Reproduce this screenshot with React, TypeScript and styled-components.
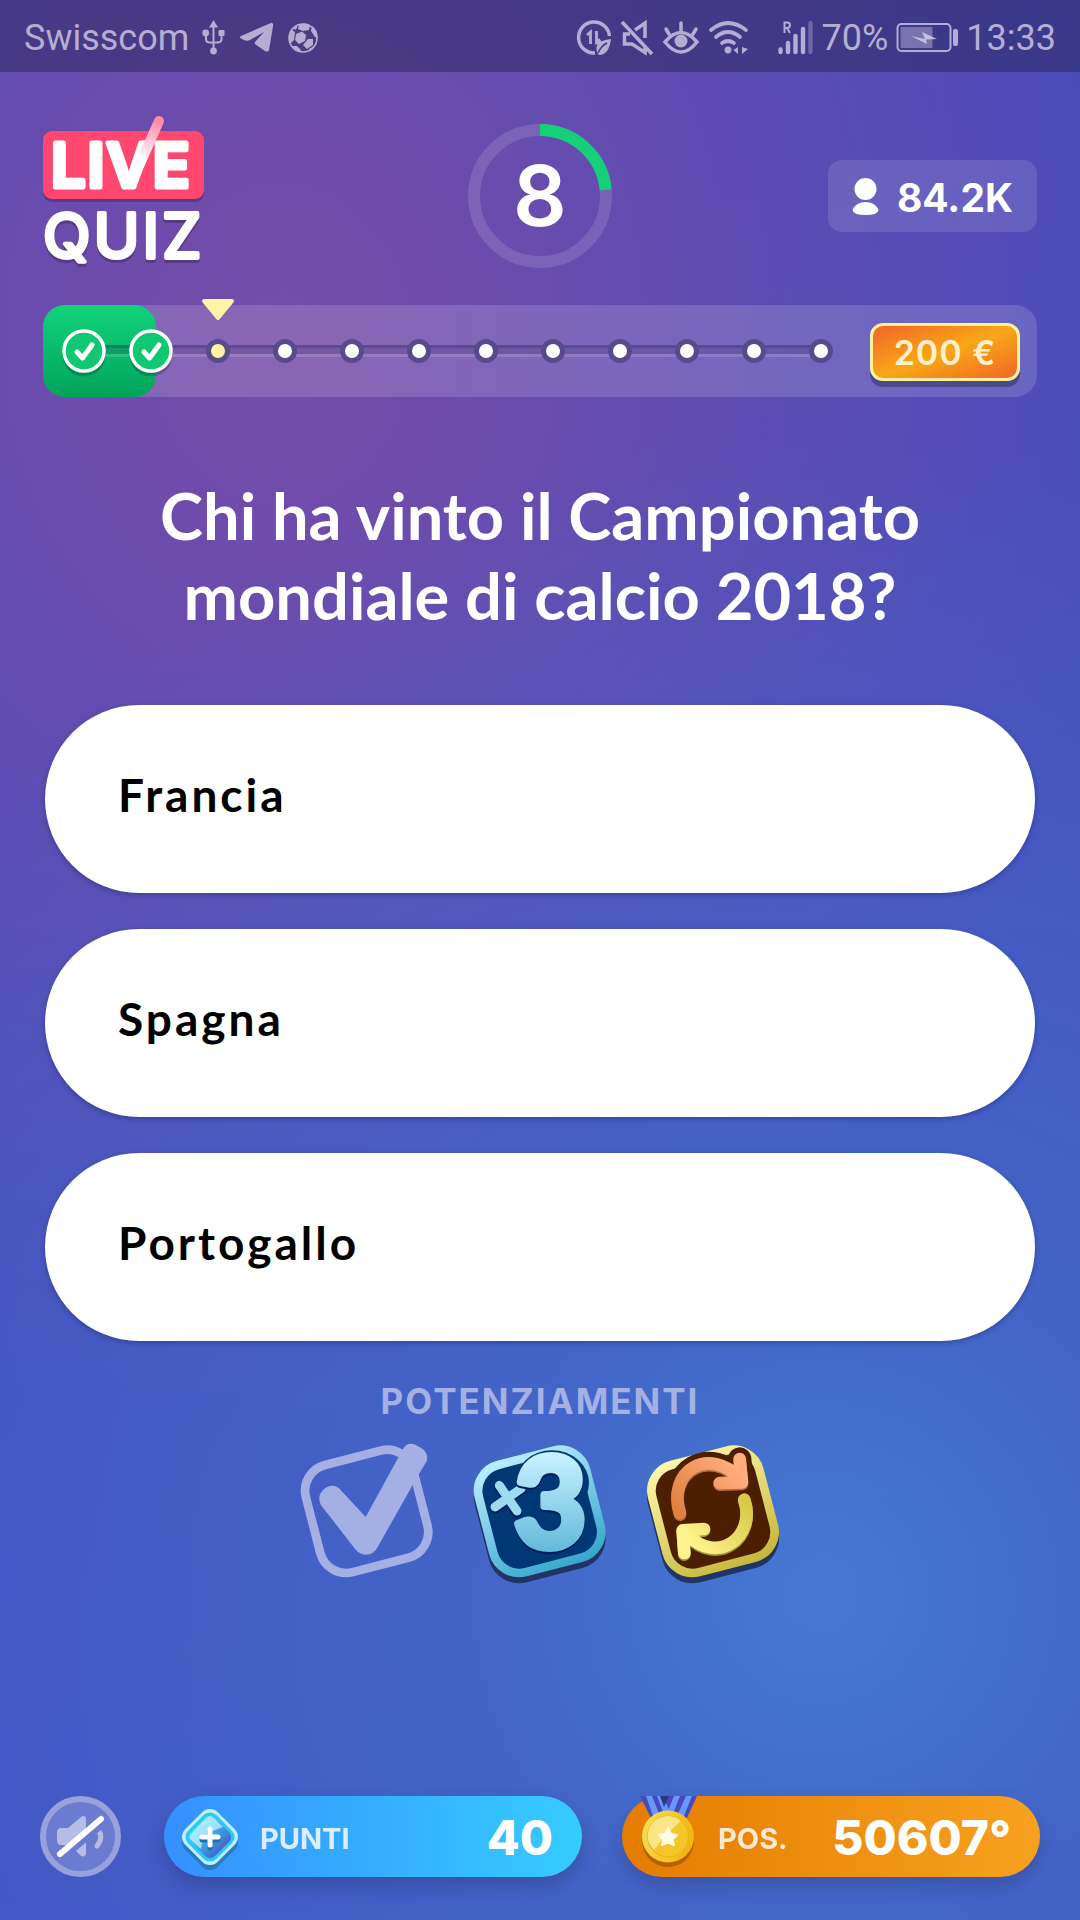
import React, { useState } from "react";
import styled, { createGlobalStyle } from "styled-components";

const display = `Inter, "Open Sans", sans-serif`;
const reading = `Lato, "Open Sans", sans-serif`;
const system = `Roboto, "Noto Sans", sans-serif`;

const GlobalStyle = createGlobalStyle`
  *, *::before, *::after { box-sizing: border-box; }
  body { margin: 0; background: #4455c1; }
  button { font: inherit; border: 0; padding: 0; background: none; color: inherit; cursor: pointer; }
  svg { display: block; flex: none; overflow: visible; }
`;

const Page = styled.div`
  min-height: 100vh;
  display: flex;
  flex-direction: column;
  font-family: ${display};
  color: #fff;
  background:
    radial-gradient(circle 1160px at 76% 83%, #4479d2 0, rgba(67, 104, 200, 0.8) 32%, rgba(67, 92, 194, 0) 100%),
    radial-gradient(ellipse 880px 1080px at 26% 18%, #764ca9 0, rgba(104, 76, 174, 0.84) 42%, rgba(75, 77, 184, 0) 100%),
    linear-gradient(#4a4bb9, #4252c4);
`;

const StatusBar = styled.header`
  height: 72px;
  padding: 3px 24px 0;
  display: flex;
  align-items: center;
  justify-content: space-between;
  background: rgba(30, 30, 75, 0.42);
  color: #b6aed2;
  font: 400 36px/44px ${system};
`;

const StatusGroup = styled.div<{ $gap: number }>`
  display: flex;
  align-items: center;
  gap: ${(p) => p.$gap}px;
`;

const Game = styled.main`
  flex: 1;
  display: flex;
  flex-direction: column;
  padding: 41px 43px 43px;
`;

const TopRow = styled.div`
  display: grid;
  grid-template-columns: 1fr auto 1fr;
  align-items: center;
  height: 166px;
`;

const Timer = styled.div`
  display: grid;
  place-items: center;
  font-size: 84px;
  line-height: 88px;
  font-weight: 600;
  & > * { grid-area: 1 / 1; }
`;

const Viewers = styled.div`
  justify-self: end;
  height: 72px;
  padding: 2px 24px 0;
  display: flex;
  align-items: center;
  gap: 18px;
  border-radius: 14px;
  background: rgba(255, 255, 255, 0.12);
  font-size: 39px;
  font-weight: 700;
`;

const Progress = styled.section`
  margin-top: 26px;
  height: 92px;
  padding-right: 17px;
  display: flex;
  align-items: center;
  justify-content: space-between;
  position: relative;
  border-radius: 22px;
  background: rgba(255, 255, 255, 0.15);
`;

const Done = styled.div`
  position: absolute;
  inset: 0 auto 0 0;
  width: 113px;
  border-radius: 22px;
  background: linear-gradient(#12d27b, #02a35b);
`;

const Steps = styled.ol`
  position: relative;
  list-style: none;
  margin: 0;
  padding: 0 0 0 7px;
  display: flex;
  align-items: center;
  &::before {
    content: "";
    position: absolute;
    left: 41px;
    right: 34px;
    height: 12px;
    background: linear-gradient(rgba(40, 30, 90, 0.4) 0 3px, rgba(40, 30, 90, 0.2) 3px 9px, rgba(255, 255, 255, 0.15) 9px);
  }
`;

const Step = styled.li`
  position: relative;
  width: 67px;
  height: 92px;
  display: grid;
  place-items: center;
`;

const Dot = styled.span<{ $current: boolean }>`
  width: 24px;
  height: 24px;
  border: 5px solid #574b8b;
  border-radius: 50%;
  background: ${(p) => (p.$current ? "#fff3a6" : "#fff")};
`;

const Marker = styled.svg`
  position: absolute;
  top: -7px;
  left: 17px;
`;

const Prize = styled.strong`
  height: 58px;
  min-width: 150px;
  margin-top: 2px;
  display: grid;
  place-items: center;
  border: 3px solid #fff1a0;
  border-radius: 13px;
  background: linear-gradient(160deg, #f46f25 8%, #f7a816 50%, #f46f25 92%);
  box-shadow: 0 6px 0 #484a8b;
  color: #ffefcf;
  font-size: 34px;
  font-weight: 600;
  letter-spacing: 1px;
`;

const Question = styled.h1`
  margin: 78px 0 0;
  font-family: ${reading};
  font-size: 65px;
  line-height: 80px;
  font-weight: 700;
  text-align: center;
  text-wrap: balance;
`;

const Answers = styled.div`
  margin: 70px 2px 0;
  display: flex;
  flex-direction: column;
  gap: 36px;
`;

const Answer = styled.button`
  height: 188px;
  padding: 0 73px 10px;
  border-radius: 94px;
  background: #fff;
  box-shadow: 0 2px 5px rgba(30, 40, 100, 0.45);
  color: #000;
  font-family: ${reading};
  font-size: 46px;
  font-weight: 700;
  letter-spacing: 3px;
  text-align: left;
`;

const PowerTitle = styled.h2`
  margin: 38px 0 0;
  color: #a4b1e4;
  font-size: 35px;
  line-height: 44px;
  font-weight: 700;
  letter-spacing: 2px;
  text-align: center;
`;

const Powers = styled.div`
  margin-top: 18px;
  display: flex;
  justify-content: center;
  gap: 26px;
`;

const Footer = styled.footer`
  margin: auto -3px 0;
  display: flex;
  align-items: center;
  gap: 43px;
`;

const FooterStats = styled.div`
  flex: 1;
  display: grid;
  grid-template-columns: 1fr 1fr;
  gap: 40px;
`;

const Stat = styled.div<{ $from: string; $to: string }>`
  height: 81px;
  padding: 0 29px 0 16px;
  display: flex;
  align-items: center;
  border-radius: 41px;
  background: linear-gradient(90deg, ${(p) => p.$from}, ${(p) => p.$to});
  box-shadow: 0 10px 18px rgba(40, 50, 110, 0.35);
`;

const StatLabel = styled.span`
  margin: 3px 0 0 20px;
  font-size: 29px;
  font-weight: 700;
  opacity: 0.82;
`;

const StatValue = styled.strong`
  margin-left: auto;
  padding-top: 2px;
  font-size: 48px;
  font-weight: 800;
`;

const WordMark = styled.g`
  font-family: ${display};
  fill: #fff;
  stroke: #fff;
  stroke-linejoin: round;
`;

const Live = styled.text`
  font-size: 61px;
  font-weight: 600;
  letter-spacing: 2px;
  stroke-width: 5px;
`;

const Quiz = styled.text`
  font-size: 62px;
  font-weight: 400;
  letter-spacing: 3px;
  stroke-width: 4px;
  filter: drop-shadow(0 3px 0 #573a86);
`;

const Three = styled.text`
  font-family: ${reading};
  font-size: 375px;
  font-weight: 700;
  text-anchor: middle;
  fill: url(#iceText);
  stroke: url(#iceText);
  stroke-width: 24px;
  stroke-linejoin: round;
  filter: drop-shadow(0 6px 0 #00175a);
`;

const Logo = () => (
  <svg width="164" height="166" viewBox="43 113 164 166" role="img" aria-label="Live Quiz">
    <defs>
      <linearGradient id="tick" gradientUnits="userSpaceOnUse" x1="142" y1="160" x2="158" y2="122">
        <stop offset="0" stopColor="#fff" />
        <stop offset="1" stopColor="#ff8ca6" />
      </linearGradient>
    </defs>
    <rect x="43" y="134" width="161" height="68" rx="9" fill="#573a86" />
    <rect x="43" y="131" width="161" height="68" rx="9" fill="#ff476f" />
    <WordMark>
      <Live x="51" y="187">LIVE</Live>
      <Quiz x="43" y="258">QUIZ</Quiz>
    </WordMark>
    <path d="M131 184 L159 121" stroke="url(#tick)" strokeWidth="10" strokeLinecap="round" />
  </svg>
);

const Ring = () => (
  <svg width="144" height="144" viewBox="0 0 144 144" aria-hidden="true">
    <circle cx="72" cy="72" r="66" fill="none" stroke="#fff" strokeOpacity=".13" strokeWidth="12" />
    <path d="M72 6 A66 66 0 0 1 137.700 66" fill="none" stroke="#14d177" strokeWidth="12" />
  </svg>
);

const CheckBadge = () => (
  <svg width="48" height="52" viewBox="-24 -26 48 52" aria-label="Risposta corretta">
    <circle cy="4" r="21.500" fill="#000" opacity=".2" />
    <circle r="20" fill="#10c772" stroke="#fff" strokeWidth="3.500" />
    <path d="M-7 1 L-1.500 7 L8 -6" fill="none" stroke="#fff" strokeWidth="5" strokeLinecap="round" strokeLinejoin="round" />
  </svg>
);

const StatusLeftIcons = () => (
  <>
    <svg width="24" height="36" viewBox="202 19 24 36" fill="#b6aed2" aria-hidden="true">
      <path d="M213.500 19 L218 26.500 H209Z" />
      <path d="M213.500 25 V49 M206 33 V38 Q206 41.500 210 41.500 H217 Q221.500 41.500 221.500 38 V33" fill="none" stroke="#b6aed2" strokeWidth="2" />
      <circle cx="205.700" cy="32" r="3.400" /><rect x="218.500" y="29" width="6" height="6" rx="1" /><circle cx="213.500" cy="50" r="3.400" />
    </svg>
    <svg width="35" height="32" viewBox="241 22 35 32" fill="#b6aed2" aria-hidden="true">
      <path d="M243 36 L273 23 Q275.500 22.500 275.200 25 L271 50 Q270 53 267 51 L257.500 44.500 Q256 43 257.500 41.500 L266 32 L252 40 Q249 41.500 246 40 L243 38.500 Q241 37 243 36Z" />
    </svg>
    <svg width="32" height="32" viewBox="-16 -16 32 32" aria-hidden="true">
      <circle r="14" fill="#4d3a80" stroke="#b6aed2" strokeWidth="1.500" />
      <g fill="#b6aed2">
        <path d="M-7 -4 L-1 -6.500 L3 -3 L2 3 L-4 6 L-8 2Z" />
        <path d="M-4 -13 Q2 -15.500 7 -13 L6 -8 L0 -7 L-5 -9Z" />
        <path d="M5 1 L10 1 L10 7 L4 11 L0 7Z" />
        <path d="M9 -12 Q15 -8 14.500 0 L12 -1 L8 -7Z" />
        <path d="M-14 -3 Q-13 -7 -11 -8 L-8 -6 L-9 2 L-13 6 Q-15 1 -14 -3Z" />
        <path d="M-12 8 L-6 8 L-2 12 L-3 14 Q-9 13 -12 8Z" />
        <path d="M11 8 L14 5 Q12 10 7 13 L6 11Z" />
        <path d="M-10 -10 L-6 -13 L-6 -10 L-8 -8Z" />
      </g>
    </svg>
  </>
);

const tone = "#b3add3";
const StatusRightIcons = () => (
  <>
    <svg width="34" height="36" viewBox="579 19 34 36" fill="none" stroke={tone} aria-hidden="true">
      <path d="M596 52 A15.500 15.500 0 1 1 610.500 35" strokeWidth="3.500" />
      <path d="M588 34 L591.500 31 V43 M597.500 30 V42 H602 L599 38" strokeWidth="2.800" />
      <path d="M612 38 Q599 39 597.500 46 Q597 51 600 54 Q610 54 612 38Z" fill={tone} stroke="none" />
      <path d="M599 52 Q602 45 608 42" stroke="#45387f" strokeWidth="1.500" />
    </svg>
    <svg width="33" height="36" viewBox="623 19 33 36" fill="none" stroke={tone} strokeWidth="3.500" aria-hidden="true">
      <path d="M624 21 L654 53 M637 29 L647 22 V37 M632 33 H626.500 V43 H634 L647 51.500 V45" />
    </svg>
    <svg width="36" height="36" viewBox="666 19 36 36" fill="none" stroke={tone} strokeWidth="3.500" strokeLinecap="round" aria-hidden="true">
      <path d="M668 41 Q684 22 700 41 Q684 61 668 41Z M684 29 V22 M672 33 L669 28 M696 33 L699 28" />
      <circle cx="684" cy="40" r="6.500" fill={tone} stroke="none" />
    </svg>
    <svg width="42" height="36" viewBox="711 18 42 36" fill="none" stroke={tone} strokeWidth="3.700" strokeLinecap="round" aria-hidden="true">
      <path d="M714 28 Q731 14 749 28 M719 35 Q731 25 743 35 M725 41 Q731 37 737 41" />
      <circle cx="731" cy="48" r="3.400" fill={tone} stroke="none" />
      <path d="M741 45 V52 L736.500 48Z M745 45 V52 L751 47Z" fill={tone} stroke="none" />
    </svg>
  </>
);

const SignalIcon = () => (
  <svg width="36" height="36" viewBox="779 18 36 36" fill="none" stroke={tone} strokeWidth="4.400" strokeLinecap="round" aria-hidden="true">
    <path d="M781.500 47.500 V50 M789 41 V50 M796.500 34 V50 M804 27 V50" />
    <path d="M811.500 21 V50" opacity=".4" />
    <path d="M785.500 31 V20.500 H788 Q791 20.500 791 23 Q791 26 788 26 H786 M788 26 L791 31" strokeWidth="2" strokeLinecap="butt" />
  </svg>
);

const BatteryIcon = () => (
  <svg width="62" height="32" viewBox="895 21 62 32" aria-hidden="true">
    <rect x="896.500" y="23" width="53" height="27" rx="4" fill="none" stroke={tone} strokeWidth="2" />
    <rect x="899.500" y="26" width="32" height="21" rx="1" fill={tone} opacity=".5" />
    <rect x="952" y="28" width="5" height="17" rx="2" fill={tone} />
    <path d="M910 35 L924 38 L921 31 L936 38 L925 38.500 L926 43Z" fill="#c5c0e0" />
  </svg>
);

const PersonIcon = () => (
  <svg width="27" height="38" viewBox="0 0 27 38" fill="#fff" aria-hidden="true">
    <circle cx="13.500" cy="11" r="11" />
    <path d="M0.500 32 Q4 24 13.500 24 Q23 24 26.500 32 Q26 37 13.500 37 Q1 37 0.500 32Z" />
  </svg>
);

const Tile = ({ cx, y = 425, ...rest }: { cx: number; y?: number } & React.SVGProps<SVGRectElement>) => (
  <rect x={cx - 166} y={y - 166} width="332" height="332" rx="80" strokeWidth="26" transform={`rotate(-14.500 ${cx} ${y})`} {...rest} />
);

const TickPower = () => (
  <svg width="147" height="147" viewBox="43 214 441 441" aria-hidden="true">
    <Tile cx={261} fill="none" stroke="#a4b0e3" />
    <path d="M123 405 Q110 375 137 355 Q165 338 185 363 L258 442 L370 238 Q382 217 404 224 L425 235 Q448 250 441 275 L416 316 L294 532 Q283 555 258 555 Q240 553 228 540Z" fill="#a4b0e3" />
  </svg>
);

const TriplePower = () => (
  <svg width="147" height="147" viewBox="562 214 441 441" aria-hidden="true">
    <defs>
      <linearGradient id="ice" gradientUnits="userSpaceOnUse" x1="740" y1="230" x2="830" y2="610">
        <stop offset="0" stopColor="#bbefff" /><stop offset="1" stopColor="#38a5cc" />
      </linearGradient>
      <linearGradient id="iceText" gradientUnits="userSpaceOnUse" x1="0" y1="258" x2="0" y2="545">
        <stop offset="0" stopColor="#c6f1ff" /><stop offset="1" stopColor="#62b9da" />
      </linearGradient>
    </defs>
    <Tile cx={780} y={443} fill="#203466" stroke="#203466" />
    <Tile cx={780} fill="#003876" stroke="url(#ice)" />
    <ellipse cx="817" cy="340" rx="111" ry="98" fill="#003876" />
    <g fill="none" strokeLinecap="round">
      <path d="M659 350 L712 428 M646 416 L724 360" stroke="#00175a" strokeWidth="31" />
      <path d="M659 347 L712 424 M646 412 L724 357" stroke="#9cdcf2" strokeWidth="27" />
    </g>
    <Three x="812" y="532">3</Three>
  </svg>
);

const SwapPower = () => {
  const top = "M1200 430 C1160 305 1285 225 1385 330 M1379 268 L1386 338 L1319 340";
  const bottom = "M1393 390 C1430 500 1312 590 1222 494 M1272 478 L1208 482 L1213 550";
  return (
    <svg width="147" height="147" viewBox="1080 214 441 441" aria-hidden="true">
      <defs>
        <linearGradient id="gold" gradientUnits="userSpaceOnUse" x1="1260" y1="230" x2="1350" y2="610">
          <stop offset="0" stopColor="#fff9a8" /><stop offset="1" stopColor="#c7b63d" />
        </linearGradient>
        <linearGradient id="peach" gradientUnits="userSpaceOnUse" x1="1190" y1="430" x2="1360" y2="290">
          <stop offset="0" stopColor="#df7f3d" /><stop offset="1" stopColor="#ffad7c" />
        </linearGradient>
        <linearGradient id="lemon" gradientUnits="userSpaceOnUse" x1="1250" y1="530" x2="1400" y2="400">
          <stop offset="0" stopColor="#fff38d" /><stop offset="1" stopColor="#d9c947" />
        </linearGradient>
      </defs>
      <Tile cx={1299} y={443} fill="#203466" stroke="#203466" />
      <Tile cx={1299} fill="#4b1f00" stroke="url(#gold)" />
      <g fill="none" strokeWidth="38" strokeLinecap="round" strokeLinejoin="round">
        <path d={top} stroke="#4b1f00" strokeWidth="70" />
        <path d={top} stroke="#b37043" transform="translate(0 5)" />
        <path d={top} stroke="url(#peach)" />
        <path d={bottom} stroke="#a39834" transform="translate(0 5)" />
        <path d={bottom} stroke="url(#lemon)" />
      </g>
    </svg>
  );
};

const MuteIcon = () => (
  <svg width="81" height="81" viewBox="40 1796 81 81" aria-hidden="true">
    <circle cx="80.500" cy="1836.500" r="37.500" fill="#6b7bcf" stroke="#97a1dc" strokeWidth="6" />
    <path d="M61 1828 H68 L81 1817 Q86 1814 86 1820 V1853 Q85 1859 80 1855 L70 1845 H61 Q57 1845 57 1840 V1833 Q57 1828 61 1828Z" fill="#b5bce8" />
    <path d="M98 1830 Q104 1837 97 1846" fill="none" stroke="#b5bce8" strokeWidth="5" strokeLinecap="round" />
    <path d="M63 1857 L105 1822" stroke="#6b7bcf" strokeWidth="7" />
    <path d="M60 1854 L101 1819" stroke="#fff" strokeWidth="6" strokeLinecap="round" />
  </svg>
);

const GemIcon = () => (
  <svg width="60" height="64" viewBox="-30 -32 60 64" aria-hidden="true">
    <defs>
      <linearGradient id="gem" x1="0" y1="0" x2="1" y2="0">
        <stop offset="0" stopColor="#41dcfb" /><stop offset=".5" stopColor="#37a9e8" /><stop offset="1" stopColor="#4567c8" />
      </linearGradient>
    </defs>
    <rect x="-23" y="-23" width="46" height="46" rx="11" transform="translate(0 5) rotate(45)" fill="#2879c9" />
    <rect x="-23" y="-23" width="46" height="46" rx="11" transform="rotate(45)" fill="#bff2ff" />
    <rect x="-20" y="-20" width="40" height="40" rx="9" transform="rotate(45)" fill="#2fc7fa" />
    <rect x="-17" y="-17" width="34" height="34" rx="7" transform="rotate(45)" fill="url(#gem)" />
    <path d="M-19 -3 L-4 -19 Q0 -23 4 -19 L13 -10 Q-8 -4 -9 12 L-19 3 Q-22 0 -19 -3Z" fill="#d9f8ff" opacity=".65" />
    <path d="M0 -5 V11 M-8 3 H8" stroke="#1d72ad" strokeWidth="5" strokeLinecap="round" />
    <path d="M0 -8 V8 M-8 0 H8" stroke="#fff" strokeWidth="5" strokeLinecap="round" />
  </svg>
);

const MedalIcon = () => (
  <svg width="60" height="81" viewBox="638 1796 60 81" aria-hidden="true">
    <defs>
      <linearGradient id="medal" x1="0" y1="0" x2="1" y2=".3">
        <stop offset="0" stopColor="#fbe15a" /><stop offset="1" stopColor="#f3b70c" />
      </linearGradient>
    </defs>
    <path d="M640 1796 H697 L686 1820 H652Z" fill="#454abd" />
    <path d="M646 1796 H652 L660 1816 H653Z M657 1796 H663 L669 1810 L665 1817Z M674 1796 H680 L672 1816 H666Z M686 1796 H692 L684 1816 H677Z" fill="#6898ff" />
    <path d="M660 1796 H669 L664 1807Z" fill="#2a397d" />
    <circle cx="668" cy="1841" r="26" fill="#b36100" />
    <circle cx="668" cy="1836.500" r="26" fill="url(#medal)" />
    <circle cx="668" cy="1836.500" r="20.500" fill="#f5c529" stroke="#e5b51c" />
    <path d="M649 1843 A20 20 0 0 1 681 1821 Q668 1832 654 1850Z" fill="#fff6b8" opacity=".65" />
    <path d="M668 1828 L671 1834 L677 1835 L672.500 1839.500 L674 1845 L668 1842.500 L662 1845 L663.500 1839.500 L659 1835 L665 1834Z" fill="#fffbe3" stroke="#fffbe3" strokeWidth="2" strokeLinejoin="round" />
  </svg>
);

const steps = Array.from({ length: 12 }, (_, i) => i);
const answers = ["Francia", "Spagna", "Portogallo"];

export default function App() {
  const [, setPicked] = useState<string | null>(null);
  return (
    <Page>
      <GlobalStyle />
      <StatusBar>
        <StatusGroup $gap={13}>
          <span>Swisscom</span>
          <StatusLeftIcons />
        </StatusGroup>
        <StatusGroup $gap={28}>
          <StatusGroup $gap={9}>
            <StatusRightIcons />
          </StatusGroup>
          <StatusGroup $gap={8}>
            <SignalIcon />
            <span>70%</span>
            <BatteryIcon />
            <span>13:33</span>
          </StatusGroup>
        </StatusGroup>
      </StatusBar>
      <Game>
        <TopRow>
          <Logo />
          <Timer>
            <Ring />
            <span>8</span>
          </Timer>
          <Viewers>
            <PersonIcon />
            84.2K
          </Viewers>
        </TopRow>
        <Progress aria-label="Progresso">
          <Done />
          <Steps>
            {steps.map((i) => (
              <Step key={i}>
                {i === 2 && (
                  <Marker width="34" height="23" viewBox="0 0 34 23" aria-hidden="true">
                    <path d="M3 3 H31 L17 20Z" fill="#fff3a6" stroke="#fff3a6" strokeWidth="4" strokeLinejoin="round" />
                  </Marker>
                )}
                {i < 2 ? <CheckBadge /> : <Dot $current={i === 2} />}
              </Step>
            ))}
          </Steps>
          <Prize>200 €</Prize>
        </Progress>
        <Question>Chi ha vinto il Campionato mondiale di calcio 2018?</Question>
        <Answers>
          {answers.map((a) => (
            <Answer key={a} type="button" onClick={() => setPicked(a)}>
              {a}
            </Answer>
          ))}
        </Answers>
        <PowerTitle>POTENZIAMENTI</PowerTitle>
        <Powers>
          <button type="button" aria-label="Risposta giusta" disabled><TickPower /></button>
          <button type="button" aria-label="Più tre"><TriplePower /></button>
          <button type="button" aria-label="Cambia domanda"><SwapPower /></button>
        </Powers>
        <Footer>
          <button type="button" aria-label="Audio disattivato"><MuteIcon /></button>
          <FooterStats>
            <Stat $from="#3590ff" $to="#35ccff">
              <GemIcon />
              <StatLabel>PUNTI</StatLabel>
              <StatValue>40</StatValue>
            </Stat>
            <Stat $from="#e47c00" $to="#f7a11f">
              <MedalIcon />
              <StatLabel>POS.</StatLabel>
              <StatValue>50607°</StatValue>
            </Stat>
          </FooterStats>
        </Footer>
      </Game>
    </Page>
  );
}
